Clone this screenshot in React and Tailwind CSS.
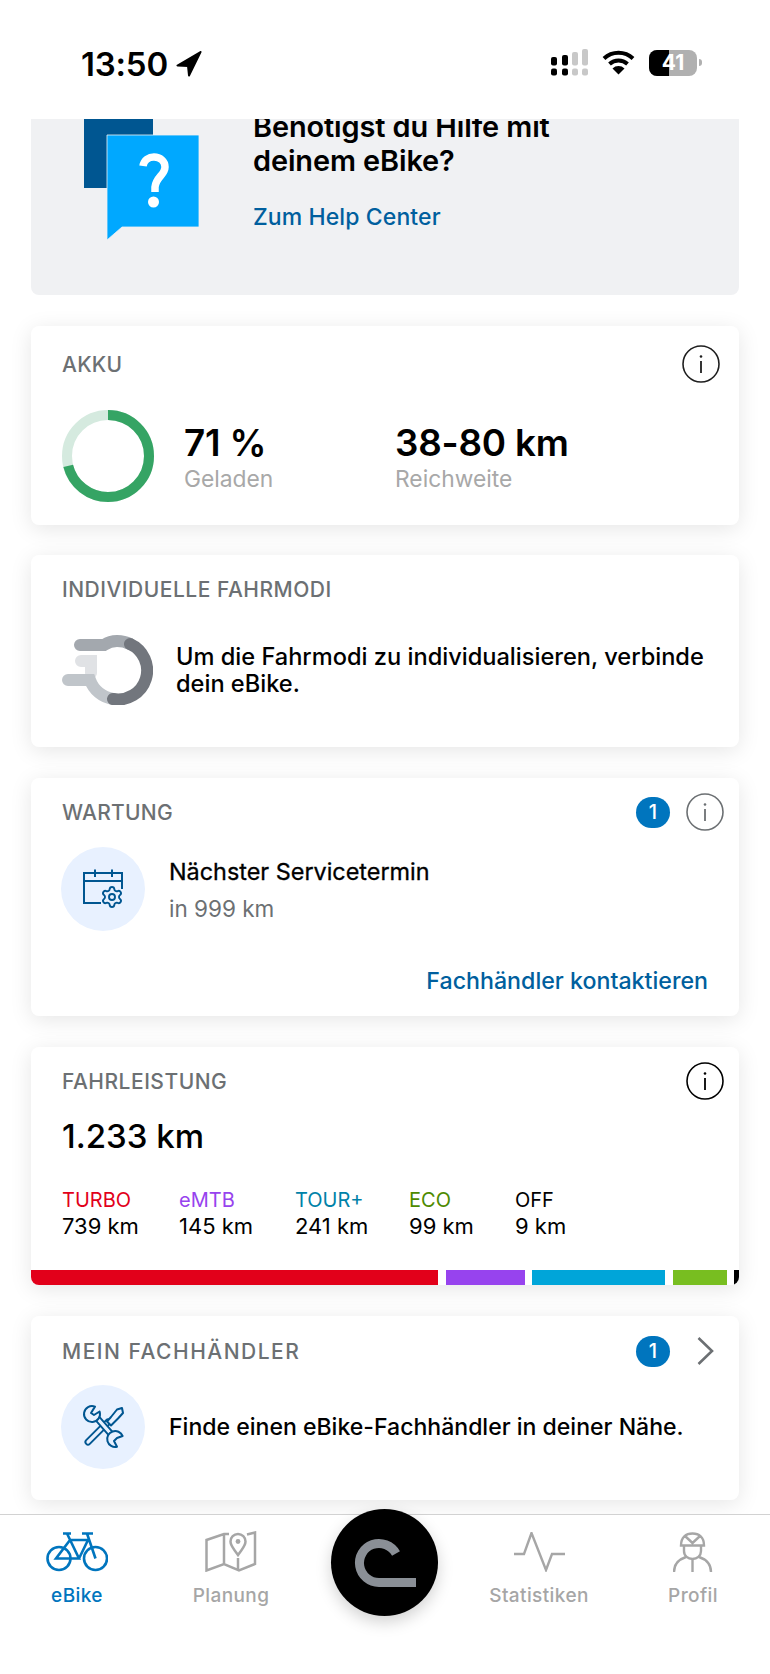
import React from "react";
import { Settings } from "lucide-react";

function Info({ color = "#1f1f1f" }) {
  return (
    <svg width="38" height="38" viewBox="0 0 38 38" fill="none" className="shrink-0">
      <circle cx="19" cy="19" r="18" stroke={color} strokeWidth="1.6" />
      <circle cx="19" cy="11.5" r="1.3" fill={color} />
      <path d="M19 16v12" stroke={color} strokeWidth="1.8" />
    </svg>
  );
}

function Badge() {
  return (
    <span className="flex h-[31px] w-[34px] items-center justify-center rounded-full bg-[#0075be] text-[20px] font-medium text-white">
      1
    </span>
  );
}

function Card({ className = "", children }) {
  return (
    <section className={"overflow-hidden rounded-lg bg-white shadow-[0_4px_22px_rgba(0,0,0,0.1)] " + className}>
      {children}
    </section>
  );
}

function Header({ children, title, tracking = "tracking-[0.25px]", className = "" }) {
  return (
    <div className={"flex h-[38px] items-center justify-between pl-[31px] " + className}>
      <h2 className={"pt-[2px] text-[21px] font-medium text-[#6c7073] " + tracking}>{title}</h2>
      {children}
    </div>
  );
}

function HelpIcon() {
  return (
    <svg width="116" height="121" viewBox="0 0 116 121" className="shrink-0">
      <rect x="0" y="-20" width="69" height="89" fill="#005691" />
      <path d="M23 16H115V108H38L23 121Z" fill="#00a8ff" stroke="#f0f1f3" strokeWidth="0.8" />
      <path d="M59 47c1-6 6-9 11-9 6 0 11 4 11 10 0 8-9 10-10 20v5" fill="none" stroke="#fff" strokeWidth="7.5" />
      <ellipse cx="69.5" cy="83" rx="5.5" ry="5.5" fill="#fff" />
    </svg>
  );
}

function Ring() {
  const r = 41;
  const c = 2 * Math.PI * r;
  return (
    <svg width="92" height="92" viewBox="0 0 92 92" className="shrink-0">
      <circle cx="46" cy="46" r={r} fill="none" stroke="#d5eadf" strokeWidth="10" />
      <circle
        cx="46"
        cy="46"
        r={r}
        fill="none"
        stroke="#35a464"
        strokeWidth="10"
        strokeDasharray={`${c * 0.71} ${c}`}
        transform="rotate(-90 46 46)"
      />
    </svg>
  );
}

function ModesIcon() {
  return (
    <svg width="91" height="70" viewBox="0 0 91 70" fill="none" strokeWidth="12" strokeLinecap="round" className="shrink-0">
      <path d="M19 26H29V38" stroke="#e0e2e5" />
      <path d="M6 45H28A29 29 0 0 0 51 64" stroke="#c0c5ca" />
      <path d="M18 10H42Q48 6 55 6A29 29 0 0 1 68 9" stroke="#a3a8ae" />
      <path d="M68 9A29 29 0 0 1 51 64" stroke="#72767d" />
    </svg>
  );
}

function CalendarIcon() {
  return (
    <div className="flex h-[84px] w-[84px] shrink-0 items-center justify-center rounded-full bg-[#e8f1ff]">
      <svg width="84" height="84" viewBox="0 0 84 84" fill="none">
        <path d="M61 42V26H23V56H40M23 34H61M34 22.5V30M51 22.5V30" stroke="#005691" strokeWidth="2" />
        <Settings x="39" y="38" width="24" height="24" color="#005691" strokeWidth="1.9" fill="#e8f1ff" />
      </svg>
    </div>
  );
}

function ToolsIcon() {
  const c = "#005691";
  const bg = "#e8f1ff";
  return (
    <div className="flex h-[84px] w-[84px] shrink-0 items-center justify-center rounded-full bg-[#e8f1ff]">
      <svg width="84" height="84" viewBox="0 0 84 84" fill="none" strokeLinecap="round" strokeLinejoin="round">
        <path d="M27 57L47 37" stroke={c} strokeWidth="7" />
        <path d="M27 57L47 37" stroke={bg} strokeWidth="3.2" />
        <path d="M46 36.5L50 32L56 24.5L61 23L62 28L57 33.5L50 40.5Z" stroke={c} strokeWidth="2" fill={bg} />
        <path d="M36 33L50 49" stroke={c} strokeWidth="7" />
        <path d="M36 33L50 49" stroke={bg} strokeWidth="3.2" />
        <path d="M34 21.6A8 8 0 1 0 38.6 26.5L33 30L30 28Z" stroke={c} strokeWidth="2" fill={bg} />
        <path d="M61.6 51A8 8 0 1 0 56 61.8L53 56L56 53Z" stroke={c} strokeWidth="2" fill={bg} />
      </svg>
    </div>
  );
}

function BikeIcon() {
  return (
    <svg width="62" height="40" viewBox="0 0 62 40" fill="none" stroke="#0075be" strokeWidth="2.6">
      <circle cx="13" cy="26.5" r="11.5" />
      <circle cx="49.5" cy="26.5" r="11.5" />
      <path d="M17 1.5H25M36 1.5H47M21 1.5L33 26.5H10L24 8H42M33 26.5L42 8M41 1.5L49.5 26.5" />
    </svg>
  );
}

function MapIcon() {
  return (
    <svg width="52" height="41" viewBox="0 0 52 41" fill="none" stroke="#a6a6a6" strokeWidth="2.5">
      <path d="M24 3L19 3L1.5 9V39.5L19 33L34 39.5L50 33V1.5L42 3.5M19 3V33M33 27V39" />
      <path d="M33 24C29 18 25.5 15 25.5 10.5A7.5 7.5 0 0 1 40.5 10.5C40.5 15 37 18 33 24Z" />
      <circle cx="33" cy="10.5" r="2.4" fill="#a6a6a6" stroke="none" />
    </svg>
  );
}

function StatsIcon() {
  return (
    <svg width="51" height="40" viewBox="0 0 51 40" fill="none" stroke="#a6a6a6" strokeWidth="2.4">
      <path d="M0 22H10L17.5 1L32 38L38 22H51" />
    </svg>
  );
}

function ProfileIcon() {
  return (
    <svg width="40" height="40" viewBox="0 0 40 40" fill="none" stroke="#a6a6a6" strokeWidth="2.4">
      <path d="M8 13.5C8 5 13 1.5 19.5 1.5S31 5 31 13.5ZM12 4L19.5 11L27 4" />
      <path d="M11 14V19C11 24 15 27 19.5 27S28 24 28 19V14" />
      <path d="M1 40C1 31 7 27 13 25M38 40C38 31 32 27 26 25M19.5 28V40" />
    </svg>
  );
}

function Tab({ label, active, children }) {
  return (
    <div className="flex flex-col items-center">
      <div className="flex h-[42px] items-end">{children}</div>
      <span
        className={
          "mt-[12px] text-[19px] font-medium leading-[24px] tracking-[0.4px] " +
          (active ? "text-[#0075be]" : "text-[#a6a6a6]")
        }
      >
        {label}
      </span>
    </div>
  );
}

const modes = [
  { name: "TURBO", km: "739 km", color: "text-[#e2001a]", w: "w-[117px]" },
  { name: "eMTB", km: "145 km", color: "text-[#9743ee]", w: "w-[116px]" },
  { name: "TOUR+", km: "241 km", color: "text-[#0082a8]", w: "w-[114px]" },
  { name: "ECO", km: "99 km", color: "text-[#4d8a00]", w: "w-[106px]" },
  { name: "OFF", km: "9 km", color: "text-black", w: "w-auto" },
];

export default function App() {
  return (
    <div className="relative flex h-[1674px] w-[770px] flex-col overflow-hidden bg-white text-black font-[family-name:Inter,sans-serif]">
      {/* status bar */}
      <header className="flex h-[119px] shrink-0 items-start justify-between pl-[81px] pr-[68px] pt-[41px]">
        <div className="flex items-center gap-[8px]">
          <span className="pt-[2px] text-[33px] font-semibold leading-[42px] tracking-[-0.2px]">13:50</span>
          <svg width="26" height="26" viewBox="0 0 26 26" className="mt-[2px]">
            <path d="M24.5 1L1.5 14.5L12 15L13 24.5Z" fill="#000" stroke="#000" strokeWidth="2" strokeLinejoin="round" />
          </svg>
        </div>
        <div className="flex items-center pt-[8px]">
          <svg width="38" height="27" viewBox="0 0 38 27" className="mr-[13px]">
            <g fill="#000">
              <rect x="0" y="8" width="6" height="8.5" rx="2" />
              <rect x="11" y="6" width="6" height="10.5" rx="2" />
              <rect x="0" y="19.5" width="6" height="7" rx="2" />
              <rect x="11" y="19.5" width="6" height="7" rx="2" />
            </g>
            <g fill="#c8c8c8">
              <rect x="21" y="3" width="6" height="13.5" rx="2" />
              <rect x="31" y="0" width="6" height="16.5" rx="2" />
              <rect x="21" y="19.5" width="6" height="7" rx="2" />
              <rect x="31" y="19.5" width="6" height="7" rx="2" />
            </g>
          </svg>
          <svg width="33" height="25" viewBox="0 0 33 25" fill="none" stroke="#000" strokeWidth="4" className="mr-[14px]">
            <path d="M2 8.5A21 21 0 0 1 31 8.5" />
            <path d="M7.5 14A13.5 13.5 0 0 1 25.5 14" />
            <path d="M16.5 24.5L10.5 18.5A8.5 8.5 0 0 1 22.5 18.5Z" fill="#000" stroke="none" />
          </svg>
          <div className="relative flex h-[26px] w-[48px] items-center justify-center overflow-hidden rounded-[8px] bg-[#b0b0b0]">
            <span className="absolute inset-y-0 left-0 w-[20px] bg-black" />
            <span className="relative text-[21px] font-bold text-white">41</span>
          </div>
          <span className="ml-[2px] h-[7px] w-[3px] rounded-r-full bg-[#b0b0b0]" />
        </div>
      </header>

      {/* scrolling content */}
      <main className="flex h-[1395px] shrink-0 flex-col overflow-hidden px-[31px]">
        <div className="flex h-[176px] shrink-0 overflow-hidden rounded-b-lg bg-[#f0f1f3] pl-[53px]">
          <HelpIcon />
          <div className="ml-[53px] mt-[-9px]">
            <h1 className="whitespace-nowrap text-[28.9px] font-semibold leading-[34px] tracking-[-0.1px]">
              Benötigst du Hilfe mit
              <br />
              deinem eBike?
            </h1>
            <p className="mt-[24px] text-[23px] font-medium leading-[30px] tracking-[0.1px] text-[#005f9e]">Zum Help Center</p>
          </div>
        </div>

        <Card className="mt-[31px] h-[199px] shrink-0 pt-[19px]">
          <Header title="AKKU" className="pr-[19px]">
            <Info />
          </Header>
          <div className="mt-[27px] flex pl-[31px]">
            <Ring />
            <div className="ml-[30px] w-[211px] pt-[12px]">
              <div className="text-[36.8px] font-semibold leading-[42px] tracking-[-0.2px]">71 %</div>
              <div className="text-[22.8px] leading-[30px] text-[#a8a8a8]">Geladen</div>
            </div>
            <div className="pt-[12px]">
              <div className="text-[36.8px] font-semibold leading-[42px] tracking-[-0.2px]">38-80 km</div>
              <div className="text-[22.8px] leading-[30px] text-[#a8a8a8]">Reichweite</div>
            </div>
          </div>
        </Card>

        <Card className="mt-[30px] h-[192px] shrink-0 pt-[15px]">
          <Header title="INDIVIDUELLE FAHRMODI" tracking="tracking-[0.5px]" />
          <div className="mt-[27px] flex items-center gap-[23px] pl-[31px]">
            <ModesIcon />
            <p className="text-[23.6px] font-medium leading-[27px]">
              Um die Fahrmodi zu individualisieren, verbinde
              <br />
              dein eBike.
            </p>
          </div>
        </Card>

        <Card className="mt-[31px] h-[238px] shrink-0 pt-[15px]">
          <Header title="WARTUNG" className="pr-[15px]">
            <div className="flex items-center gap-[16px]">
              <Badge />
              <Info color="#6c7073" />
            </div>
          </Header>
          <div className="mt-[16px] flex gap-[24px] pl-[30px]">
            <CalendarIcon />
            <div className="pt-[11px]">
              <div className="text-[23.4px] font-normal leading-[28px] [-webkit-text-stroke:0.3px_black]">Nächster Servicetermin</div>
              <div className="mt-[9px] text-[22.5px] leading-[28px] text-[#6c7073]">in 999 km</div>
            </div>
          </div>
          <p className="mt-[35px] pr-[31px] text-right text-[23.2px] font-medium leading-[30px] text-[#005f9e]">
            Fachhändler kontaktieren
          </p>
        </Card>

        <Card className="mt-[31px] flex h-[238px] shrink-0 flex-col pt-[15px]">
          <Header title="FAHRLEISTUNG" tracking="tracking-[0.5px]" className="pr-[15px]">
            <Info color="#000" />
          </Header>
          <div className="mt-[14px] pl-[31px] text-[33px] font-medium leading-[44px]">1.233 km</div>
          <div className="mt-[29px] flex pl-[31px]">
            {modes.map((m) => (
              <div key={m.name} className={m.w}>
                <div className={"text-[20px] leading-[26px] " + m.color}>{m.name}</div>
                <div className="text-[22px] leading-[26px]">{m.km}</div>
              </div>
            ))}
          </div>
          <div className="mt-auto flex h-[15px] gap-[7.5px]">
            <span className="w-[407px] bg-[#e2001a]" />
            <span className="w-[79px] bg-[#9743ee]" />
            <span className="w-[133px] bg-[#00a5d9]" />
            <span className="w-[54px] bg-[#78be20]" />
            <span className="w-[5px] bg-black" />
          </div>
        </Card>

        <Card className="mt-[31px] h-[184px] shrink-0 pt-[16px]">
          <Header title="MEIN FACHHÄNDLER" tracking="tracking-[1.5px]" className="pr-[25px]">
            <div className="flex items-center gap-[27px]">
              <Badge />
              <svg width="17" height="28" viewBox="0 0 17 28" fill="none" stroke="#6c7073" strokeWidth="2.6">
                <path d="M1.5 1L15 14L1.5 27" />
              </svg>
            </div>
          </Header>
          <div className="mt-[15px] flex items-center gap-[24px] pl-[30px]">
            <ToolsIcon />
            <p className="whitespace-nowrap text-[23.05px] font-medium">Finde einen eBike-Fachhändler in deiner Nähe.</p>
          </div>
        </Card>
      </main>

      {/* tab bar */}
      <nav className="grid flex-1 grid-cols-5 border-t border-[#d2d2d2] bg-white pt-[15px]">
        <Tab label="eBike" active>
          <BikeIcon />
        </Tab>
        <Tab label="Planung">
          <MapIcon />
        </Tab>
        <div />
        <Tab label="Statistiken">
          <StatsIcon />
        </Tab>
        <Tab label="Profil">
          <ProfileIcon />
        </Tab>
      </nav>

      <button className="absolute left-[331px] top-[1509px] flex h-[107px] w-[107px] items-center justify-center rounded-full bg-black shadow-[0_6px_16px_rgba(0,0,0,0.18)]">
        <svg width="107" height="107" viewBox="0 0 107 107" fill="none" stroke="#8a8f96" strokeWidth="9">
          <path d="M85 73.5H48A19.5 19.5 0 1 1 65 44.5" />
        </svg>
      </button>
    </div>
  );
}
